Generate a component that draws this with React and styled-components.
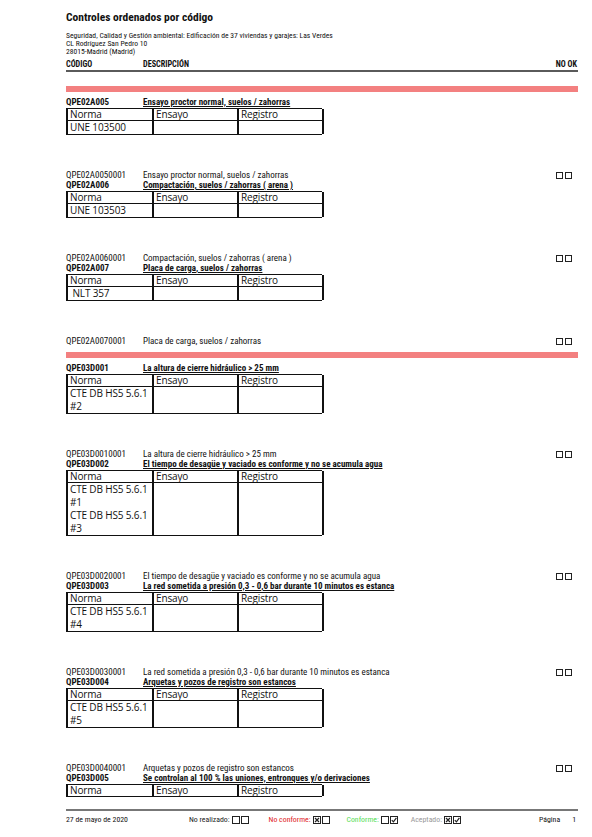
import React from "react";
import styled, { createGlobalStyle } from "styled-components";

const GlobalStyle = createGlobalStyle`
  body {
    margin: 0;
    background: #fff;
  }
`;

const narrow = `"Roboto Condensed", "Liberation Sans", Arial, sans-serif`;

const Page = styled.div`
  width: 592px;
  box-sizing: border-box;
  padding: 10px 14px 0 66px;
  font-family: ${narrow};
  color: #111;
`;

const Title = styled.h1`
  margin: 0;
  font-size: 11.5px;
  line-height: 14px;
  font-weight: 700;
`;

const Info = styled.div`
  margin-top: 8px;
  font-size: 7.6px;
  line-height: 8px;
`;

const ColHead = styled.div`
  margin-top: 4px;
  display: flex;
  font-size: 8.2px;
  line-height: 8px;
  font-weight: 700;
  padding-bottom: 2px;
  border-bottom: 2px solid #5a5a5a;
`;

const CodeCol = styled.span`
  width: 77px;
  flex: none;
`;

const Right = styled.span`
  margin-left: auto;
  margin-right: 1px;
`;

const RedBar = styled.div`
  margin-top: ${(p) => p.$top}px;
  height: 6px;
  background: #f38080;
`;

const Row = styled.div`
  display: flex;
  align-items: center;
  height: 10px;
  font-size: 9px;
  line-height: 10px;
  margin-top: ${(p) => p.$top || 0}px;
  font-weight: ${(p) => (p.$bold ? 700 : 400)};
`;

const Desc = styled.span`
  text-decoration: ${(p) => (p.$underline ? "underline" : "none")};
  white-space: nowrap;
`;

const Checks = styled.span`
  margin-left: auto;
  margin-right: 6px;
  display: flex;
  gap: 2px;
`;

const Square = styled.span`
  display: block;
  width: 5px;
  height: 5px;
  border: 1px solid #222;
`;

const Table = styled.div`
  margin-top: 1px;
  width: 256px;
  display: grid;
  grid-template-columns: 86px 85px 85px;
  border-top: 1px solid #111;
  border-bottom: 1px solid #111;
  border-left: 2px solid #111;
  box-sizing: border-box;
  font-family: "Open Sans", "Noto Sans", sans-serif;
  font-size: 10px;
  letter-spacing: -0.15px;
  color: #111;
`;

const Cell = styled.div`
  border-right: 2px solid #111;
  border-top: ${(p) => (p.$body ? "1px solid #111" : "none")};
  line-height: ${(p) => (p.$body ? 13 : 11)}px;
  white-space: pre;
  margin-left: ${(p) => (p.$first ? "-2px" : "0")};
  padding-left: ${(p) => (p.$first ? "4px" : "2px")};
`;

const Footer = styled.div`
  margin-top: 12px;
  border-top: 2px solid #777;
  padding-top: 4px;
  display: flex;
  align-items: center;
  font-size: 7.8px;
  line-height: 10px;
`;

const DateText = styled.span`
  width: 123px;
  flex: none;
`;

const Legend = styled.span`
  display: flex;
  align-items: center;
  gap: 2px;
  margin-right: ${(p) => p.$gap}px;
  color: ${(p) => p.$color};
`;

const Boxes = styled.span`
  display: flex;
  gap: 1px;
`;

const PageNo = styled.span`
  margin-left: auto;
  display: flex;
  gap: 12px;
  margin-right: 2px;
`;

function Mark({ kind }) {
  return (
    <svg width="8" height="8" viewBox="0 0 8 8">
      <rect x="0.5" y="0.5" width="7" height="7" fill="none" stroke="#222" strokeWidth="1" />
      {kind === "x" && <path d="M2 2 L6 6 M6 2 L2 6" stroke="#222" strokeWidth="1.2" />}
      {kind === "check" && <path d="M1.8 4.2 L3.4 5.8 L6.4 1.8" fill="none" stroke="#222" strokeWidth="1.2" />}
    </svg>
  );
}

const sections = [
  [
    {
      code: "QPE02A005",
      desc: "Ensayo proctor normal, suelos / zahorras",
      norma: ["UNE 103500"],
      sub: "QPE02A0050001",
    },
    {
      code: "QPE02A006",
      desc: "Compactación, suelos / zahorras ( arena )",
      norma: ["UNE 103503"],
      sub: "QPE02A0060001",
    },
    {
      code: "QPE02A007",
      desc: "Placa de carga, suelos / zahorras",
      norma: [" NLT 357"],
      sub: "QPE02A0070001",
    },
  ],
  [
    {
      code: "QPE03D001",
      desc: "La altura de cierre hidráulico > 25 mm",
      norma: ["CTE DB HS5 5.6.1", "#2"],
      sub: "QPE03D0010001",
    },
    {
      code: "QPE03D002",
      desc: "El tiempo de desagüe y vaciado es conforme y no se acumula agua",
      norma: ["CTE DB HS5 5.6.1", "#1", "CTE DB HS5 5.6.1", "#3"],
      sub: "QPE03D0020001",
    },
    {
      code: "QPE03D003",
      desc: "La red sometida a presión 0,3 - 0,6 bar durante 10 minutos es estanca",
      norma: ["CTE DB HS5 5.6.1", "#4"],
      sub: "QPE03D0030001",
    },
    {
      code: "QPE03D004",
      desc: "Arquetas y pozos de registro son estancos",
      norma: ["CTE DB HS5 5.6.1", "#5"],
      sub: "QPE03D0040001",
    },
    {
      code: "QPE03D005",
      desc: "Se controlan al 100 % las uniones, entronques y/o derivaciones",
      norma: null,
    },
  ],
];

function Item({ item, first }) {
  return (
    <>
      <Row $bold $top={first ? 5 : 0}>
        <CodeCol>{item.code}</CodeCol>
        <Desc $underline>{item.desc}</Desc>
      </Row>
      <Table>
        <Cell $first>Norma</Cell>
        <Cell>Ensayo</Cell>
        <Cell>Registro</Cell>
        {item.norma && (
          <>
            <Cell $first $body>{item.norma.join("\n")}</Cell>
            <Cell $body />
            <Cell $body />
          </>
        )}
      </Table>
      {item.sub && (
        <Row $top={35}>
          <CodeCol>{item.sub}</CodeCol>
          <Desc>{item.desc}</Desc>
          <Checks>
            <Square />
            <Square />
          </Checks>
        </Row>
      )}
    </>
  );
}

export default function App() {
  return (
    <Page>
      <GlobalStyle />
      <Title>Controles ordenados por código</Title>
      <Info>
        <div>Seguridad, Calidad y Gestión ambiental: Edificación de 37 viviendas y garajes: Las Verdes</div>
        <div>CL Rodríguez San Pedro 10</div>
        <div>28015-Madrid (Madrid)</div>
      </Info>
      <ColHead>
        <CodeCol>CÓDIGO</CodeCol>
        <span>DESCRIPCIÓN</span>
        <Right>NO OK</Right>
      </ColHead>
      {sections.map((items, s) => (
        <React.Fragment key={s}>
          <RedBar $top={s === 0 ? 14 : 6} />
          {items.map((item, i) => (
            <Item key={item.code} item={item} first={i === 0} />
          ))}
        </React.Fragment>
      ))}
      <Footer>
        <DateText>27 de mayo de 2020</DateText>
        <Legend $gap={20} $color="#222">
          No realizado:
          <Boxes>
            <Mark />
            <Mark />
          </Boxes>
        </Legend>
        <Legend $gap={17} $color="#e01b1b">
          No conforme:
          <Boxes>
            <Mark kind="x" />
            <Mark />
          </Boxes>
        </Legend>
        <Legend $gap={13} $color="#55dd55">
          Conforme:
          <Boxes>
            <Mark />
            <Mark kind="check" />
          </Boxes>
        </Legend>
        <Legend $gap={0} $color="#999">
          Aceptado:
          <Boxes>
            <Mark kind="x" />
            <Mark kind="check" />
          </Boxes>
        </Legend>
        <PageNo>
          <span>Página</span>
          <span>1</span>
        </PageNo>
      </Footer>
    </Page>
  );
}
